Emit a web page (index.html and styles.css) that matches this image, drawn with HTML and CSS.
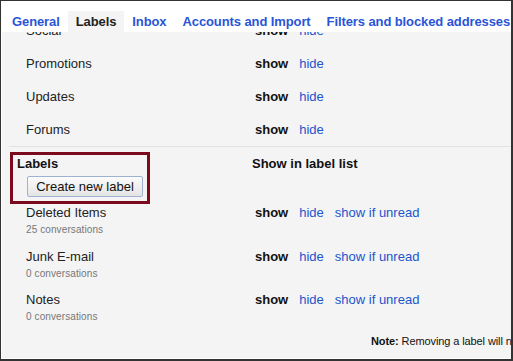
FILE: index.html
```html
<!DOCTYPE html>
<html lang="en">
<head>
    <meta charset="UTF-8">
    <meta name="viewport" content="width=device-width, initial-scale=1.0">
    <title>Settings - Labels</title>
    <link rel="stylesheet" href="styles.css">
</head>
<body>
    <div class="frame">
        <nav class="tabs">
            <a class="tab" href="#">General</a>
            <a class="tab active" href="#">Labels</a>
            <a class="tab" href="#">Inbox</a>
            <a class="tab" href="#">Accounts and Import</a>
            <a class="tab" href="#">Filters and blocked addresses</a>
        </nav>

        <div class="content">
            <div class="system-list">
                <div class="row">
                    <span class="name">Social</span>
                    <span class="actions"><b>show</b><a href="#">hide</a></span>
                </div>
                <div class="row">
                    <span class="name">Promotions</span>
                    <span class="actions"><b>show</b><a href="#">hide</a></span>
                </div>
                <div class="row">
                    <span class="name">Updates</span>
                    <span class="actions"><b>show</b><a href="#">hide</a></span>
                </div>
                <div class="row">
                    <span class="name">Forums</span>
                    <span class="actions"><b>show</b><a href="#">hide</a></span>
                </div>
            </div>

            <div class="label-head">
                <div class="highlight">
                    <div class="heading">Labels</div>
                    <button class="create-btn" type="button">Create new label</button>
                </div>
                <div class="heading col-title">Show in label list</div>
            </div>

            <div class="label-row">
                <div>
                    <div class="label-name">Deleted Items</div>
                    <div class="count">25 conversations</div>
                </div>
                <span class="actions"><b>show</b><a href="#">hide</a><a href="#">show if unread</a></span>
            </div>
            <div class="label-row">
                <div>
                    <div class="label-name">Junk E-mail</div>
                    <div class="count">0 conversations</div>
                </div>
                <span class="actions"><b>show</b><a href="#">hide</a><a href="#">show if unread</a></span>
            </div>
            <div class="label-row">
                <div>
                    <div class="label-name">Notes</div>
                    <div class="count">0 conversations</div>
                </div>
                <span class="actions"><b>show</b><a href="#">hide</a><a href="#">show if unread</a></span>
            </div>

            <p class="note"><b>Note:</b> Removing a label will not remove the messages with that label.</p>
        </div>
    </div>
</body>
</html>
```

FILE: styles.css
```css
body {
    margin: 0;
    font-family: "Liberation Sans", Arial, sans-serif;
    font-size: 13px;
    color: #222;
}
.frame {
    width: 513px;
    height: 361px;
    box-sizing: border-box;
    border-style: solid;
    border-color: #333;
    border-width: 1px 2px 2px 1px;
    background-color: white;
    display: flex;
    flex-direction: column;
    overflow: hidden;
}
.tabs {
    display: flex;
    padding: 10px 0 0 3px;
    white-space: nowrap;
}
.tab {
    padding: 0 8px;
    line-height: 21px;
    font-weight: bold;
    letter-spacing: -0.1px;
    color: #2a55d6;
    text-decoration: none;
}
.tab.active {
    background-color: #f4f4f4;
    color: #222;
}
.content {
    flex: 1;
    margin: 0 0 1px 1px;
    background-color: #f4f4f4;
    overflow: hidden;
}
.system-list {
    margin-top: -18px;
    margin-left: 7px;
    border-bottom: 1px solid #e2e2e2;
}
.row {
    display: grid;
    grid-template-columns: 229px auto;
    padding-left: 17px;
    line-height: 33px;
}
.actions {
    display: flex;
    gap: 11px;
    white-space: nowrap;
}
.actions b {
    color: #111;
}
.actions a {
    color: #2255cc;
    text-decoration: none;
}
.label-head {
    display: flex;
    margin: 5px 0 0 8px;
}
.highlight {
    width: 126px;
    padding: 1px 4px 4px 4px;
    border: 3px solid #7a0a1c;
}
.heading {
    font-weight: bold;
    line-height: 16px;
    color: #111;
}
.col-title {
    margin-left: 102px;
    padding-top: 4px;
}
.create-btn {
    display: block;
    width: 116px;
    height: 21px;
    margin: 4px 0 0 10px;
    padding: 0;
    border: 1px solid #9fb2d2;
    border-radius: 2px;
    background: linear-gradient(#fcfcfc, #e4e4e4);
    font-family: "Liberation Sans", Arial, sans-serif;
    font-size: 13px;
    color: #111;
}
.label-row {
    display: grid;
    grid-template-columns: 229px auto;
    padding: 0 0 11.5px 24px;
    line-height: 16px;
}
.label-name {
    padding-top: 1px;
}
.label-row .actions {
    padding-top: 1px;
}
.count {
    margin-top: 3px;
    font-size: 10px;
    line-height: 12px;
    letter-spacing: 0.1px;
    color: #777;
}
.note {
    margin: 0 0 0 369px;
    font-size: 11px;
    line-height: 13px;
    letter-spacing: -0.1px;
    white-space: nowrap;
    color: #111;
}
```
